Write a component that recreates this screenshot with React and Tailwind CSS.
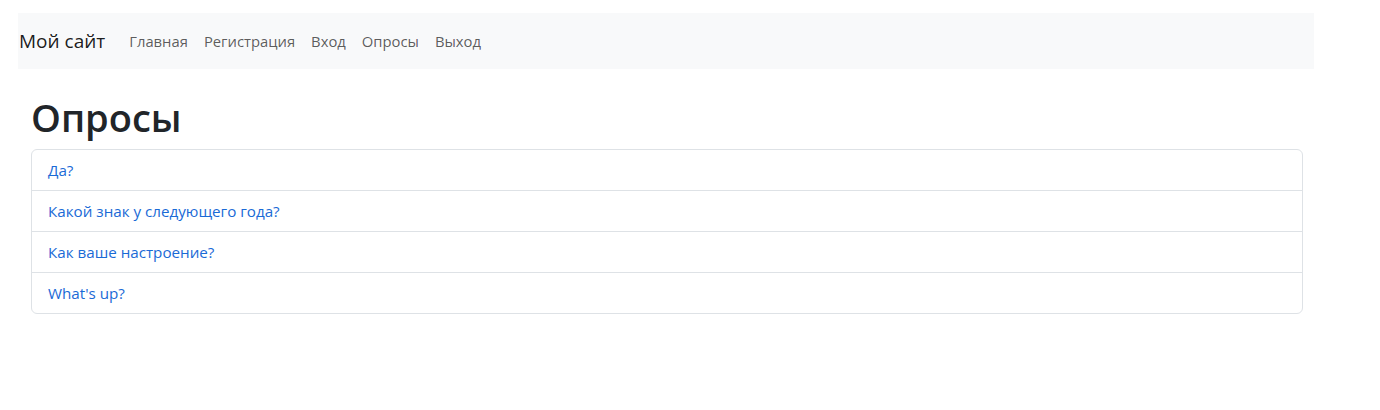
import React from 'react';

const navLinks = ['Главная', 'Регистрация', 'Вход', 'Опросы', 'Выход'];

const polls = [
  'Да?',
  'Какой знак у следующего года?',
  'Как ваше настроение?',
  "What's up?",
];

export default function App() {
  return (
    <div className="min-h-[410px] bg-white font-['Open_Sans',sans-serif] text-[#212529]">
      <div className="pt-[13px] pl-[18px] w-[1314px]">
        <nav className="flex items-center h-[56px] bg-[#f8f9fa]">
          <a href="#" className="pl-px mr-[16px] text-[19px] text-black/90 leading-[30px]">
            Мой сайт
          </a>
          <ul className="flex items-center">
            {navLinks.map((link) => (
              <li key={link}>
                <a href="#" className="block px-[8px] py-[8px] text-[14.8px] leading-[24px] text-black/65">
                  {link}
                </a>
              </li>
            ))}
          </ul>
        </nav>
      </div>

      <main className="mt-[24px] pl-[31px] w-[1303px]">
        <h1 className="text-[38px] font-semibold leading-[48px] mb-[8px]">Опросы</h1>
        <div className="flex flex-col border border-[#dee2e6] rounded-[6px]">
          {polls.map((poll, i) => (
            <a
              key={poll}
              href="#"
              className={`block px-[16px] py-[8px] text-[15.2px] leading-[24px] text-[#1a6ad6] ${
                i > 0 ? 'border-t border-[#dee2e6]' : ''
              }`}
            >
              {poll}
            </a>
          ))}
        </div>
      </main>
    </div>
  );
}
